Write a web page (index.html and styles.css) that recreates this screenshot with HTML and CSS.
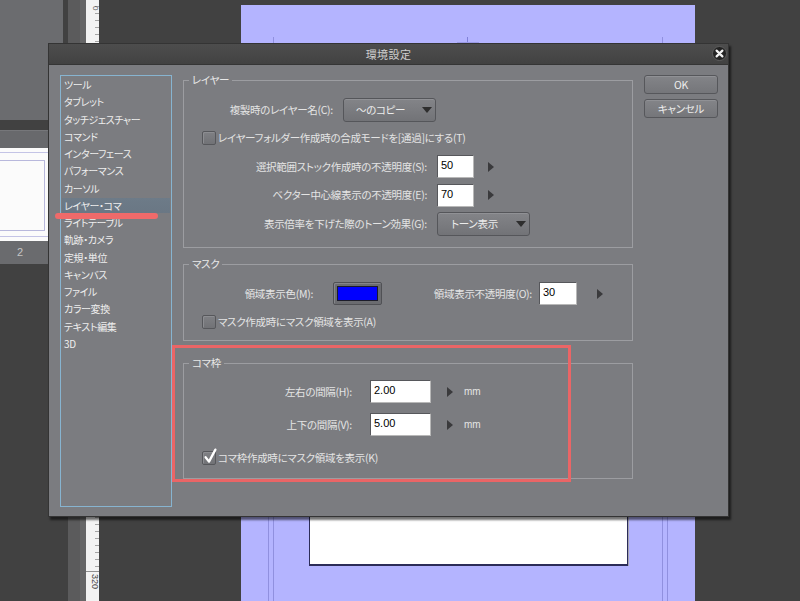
FILE: index.html
```html
<!DOCTYPE html>
<html lang="ja">
<head>
<meta charset="utf-8">
<title>環境設定</title>
<link rel="stylesheet" href="styles.css">
</head>
<body>
<div class="app">
  <div class="side">
    <div class="side-top"></div>
    <div class="side-gap"></div>
    <div class="side-head"></div>
    <div class="side-thumb"><div class="thumb-page"><div class="thumb-frame"></div></div></div>
    <div class="side-label">2</div>
  </div>
  <div class="strip"><div class="strip-a"></div><div class="strip-b"></div></div>
  <div class="ruler"><span class="r0">0</span><span class="r320">320</span></div>
  <div class="canvas">
    <div class="page">
      <div class="vline v1"></div>
      <div class="vline v2"></div>
      <div class="vline v3"></div>
      <div class="vline v4"></div>
      <div class="tick"></div>
      <div class="htick"></div>
      <div class="frame"></div>
    </div>
  </div>

  <div class="dialog">
    <div class="titlebar">
      <span class="title">環境設定</span>
      <span class="close"><svg width="15" height="15" viewBox="0 0 15 15"><circle cx="7.5" cy="7.5" r="7" fill="#232323" stroke="#5e5e5e" stroke-width="1"/><path d="M4.6 4.6 L10.4 10.4 M10.4 4.6 L4.6 10.4" stroke="#f2f2f2" stroke-width="2.2" stroke-linecap="round"/></svg></span>
    </div>
    <div class="body">
      <ul class="cats">
        <li>ツール</li>
        <li>タブレット</li>
        <li>タッチジェスチャー</li>
        <li>コマンド</li>
        <li>インターフェース</li>
        <li>パフォーマンス</li>
        <li>カーソル</li>
        <li class="sel">レイヤー・コマ</li>
        <li>ライトテーブル</li>
        <li>軌跡・カメラ</li>
        <li>定規・単位</li>
        <li>キャンバス</li>
        <li>ファイル</li>
        <li>カラー変換</li>
        <li>テキスト編集</li>
        <li>3D</li>
      </ul>

      <div class="panes">
        <section class="group g1">
          <span class="legend">レイヤー</span>
          <div class="row"><span class="lbl w149">複製時のレイヤー名(C):</span><span class="select">～のコピー<i class="caret"></i></span></div>
          <div class="row check-row"><span class="cb"></span><span class="cb-lbl">レイヤーフォルダー作成時の合成モードを[通過]にする(T)</span></div>
          <div class="row"><span class="lbl w243">選択範囲ストック作成時の不透明度(S):</span><span class="input w37">50</span><i class="spin sp14"></i></div>
          <div class="row"><span class="lbl w243">ベクター中心線表示の不透明度(E):</span><span class="input w37">70</span><i class="spin sp14"></i></div>
          <div class="row"><span class="lbl w243">表示倍率を下げた際のトーン効果(G):</span><span class="select">トーン表示<i class="caret"></i></span></div>
        </section>

        <section class="group g2">
          <span class="legend">マスク</span>
          <div class="row"><span class="lbl w129">領域表示色(M):</span><span class="swatch"><span class="swatch-color"></span></span><span class="lbl w150">領域表示不透明度(O):</span><span class="input w38">30</span><i class="spin sp20"></i></div>
          <div class="row check-row"><span class="cb"></span><span class="cb-lbl">マスク作成時にマスク領域を表示(A)</span></div>
        </section>

        <section class="group g3">
          <span class="legend">コマ枠</span>
          <div class="row"><span class="lbl w168">左右の間隔(H):</span><span class="input w61">2.00</span><i class="spin sp16"></i><span class="unit">mm</span></div>
          <div class="row"><span class="lbl w168">上下の間隔(V):</span><span class="input w61">5.00</span><i class="spin sp16"></i><span class="unit">mm</span></div>
          <div class="row check-row"><span class="cb checked"><svg width="14" height="17" viewBox="0 0 14 17"><path d="M2.6 9.2 L6 13.6 L12.4 1.6" fill="none" stroke="#ffffff" stroke-width="2.3" stroke-linecap="round" stroke-linejoin="round"/></svg></span><span class="cb-lbl">コマ枠作成時にマスク領域を表示(K)</span></div>
        </section>
      </div>

      <div class="buttons">
        <span class="btn">OK</span>
        <span class="btn">キャンセル</span>
      </div>
    </div>
    <div class="mark-box"></div>
    <div class="mark-line"></div>
  </div>
</div>
</body>
</html>
```

FILE: styles.css
```css
* { box-sizing: border-box; margin: 0; padding: 0; }
html, body { width: 800px; height: 601px; overflow: hidden; }
body {
  background: #414141;
  font-family: "Noto Sans CJK JP", sans-serif;
  font-size: 10.5px;
  letter-spacing: -0.3px;
  font-feature-settings: "palt";
  color: #e6e6e6;
}
.app { position: relative; display: flex; width: 800px; height: 601px; }

/* left side panel */
.side { width: 63px; margin-right: 5px; display: flex; flex-direction: column; }
.side-top { height: 120px; background: #6b6c6f; }
.side-gap { height: 10px; }
.side-head { height: 18px; background: #68696c; border-top: 1px solid #76777a; }
.side-thumb { height: 93px; background: #fbfbfb; padding-top: 4px; }
.thumb-page { height: 85px; border-top: 1px solid #c4c4e6; border-bottom: 1px solid #c4c4e6; padding-top: 7px; }
.thumb-frame { width: 45px; height: 71px; border: 1px solid #b8b8dc; border-left: none; }
.side-label { height: 23px; background: #6a6b6e; color: #c4c4c4; padding-left: 17px; line-height: 23px; font-family: "Liberation Sans", sans-serif; font-size: 11px; letter-spacing: 0; }

.strip { width: 18px; display: flex; }
.strip-a { width: 12px; background: #5b5b5c; }
.strip-b { width: 6px; background: #666667; }

.ruler {
  width: 13px;
  background-color: #f3f3f3;
  background-image: repeating-linear-gradient(to bottom, transparent 0 6px, #a4a4a4 6px 7px);
  background-size: 4px 100%;
  background-repeat: no-repeat;
  background-position: right top;
  display: flex;
  flex-direction: column;
  justify-content: space-between;
}
.r0 { writing-mode: vertical-rl; font-family: "Liberation Sans", sans-serif; font-size: 8px; line-height: 8px; letter-spacing: 0; color: #555; margin: 6px 0 0 1px; }
.r320 { height: 30px; border-top: 1px solid #909090; background: #f3f3f3; writing-mode: vertical-rl; font-family: "Liberation Sans", sans-serif; font-size: 9px; line-height: 9px; letter-spacing: 0; color: #444; padding: 2px 0 0 1px; }

.canvas { flex: 1; position: relative; overflow: hidden; }
.page { position: absolute; left: 142px; top: 5px; width: 454px; height: 620px; background: #b4b4ff; }
.vline { position: absolute; top: 32px; bottom: 0; width: 1px; background: #9090df; }
.v1 { left: 27px; top: 120px; }
.v2 { left: 32px; }
.v3 { left: 421px; }
.v4 { left: 426px; top: 120px; }
.tick { position: absolute; left: 226px; top: 32px; width: 1px; height: 6px; background: #8080d8; }
.htick { position: absolute; left: 216px; top: 37px; width: 22px; height: 1px; background: #9a9ae6; }
.frame { position: absolute; left: 68px; top: 440px; width: 319px; height: 121px; background: #fff; border: 1px solid #2c2c58; border-bottom-width: 2px; box-shadow: 1px 0 0 #a6a6b4; }

/* dialog */
.dialog {
  position: absolute; left: 48px; top: 43px; width: 681px; height: 474px;
  border: 1px solid #343434;
  background: #7b7c80;
  box-shadow: 2px 3px 2px rgba(0, 0, 0, 0.55);
  display: flex; flex-direction: column;
}
.titlebar {
  height: 21px; flex: none; position: relative;
  background: linear-gradient(#4d4d4d, #424242);
  border-bottom: 1px solid #353535;
  display: flex; align-items: center; justify-content: center;
}
.title { color: #cfcfcf; font-size: 11px; letter-spacing: 0.4px; line-height: 14px; }
.close { position: absolute; right: 1px; top: 2px; width: 15px; height: 15px; display: block; }
.close svg { display: block; }

.body { flex: 1; display: flex; gap: 11px; padding: 10px 10px 9px 11px; }

.cats { width: 112px; flex: none; border: 1px solid #87b4d0; list-style: none; padding: 0 1px; }
.cats li { height: 17.25px; line-height: 17.25px; padding-left: 2px; white-space: nowrap; color: #eeeeee; font-size: 10px; letter-spacing: -0.4px; }
.cats li.sel { background: linear-gradient(#6d7b88, #6a7784) no-repeat center / 100% 15px; }

.panes { width: 450px; flex: none; padding-top: 5px; display: flex; flex-direction: column; }
.group { position: relative; border: 1px solid #9c9da1; display: flex; flex-direction: column; }
.legend { position: absolute; left: 5px; top: -8px; padding: 0 3px; background: #7b7c80; line-height: 14px; color: #e8e8e8; }
.g1 { padding: 17px 0 11px; gap: 4.4px; }
.g2 { margin-top: 16.4px; padding: 17px 0 6px; gap: 4.4px; }
.g3 { margin-top: 21.6px; padding: 16px 0 8px; gap: 9px; }

.row { height: 24px; display: flex; align-items: center; }
.lbl { flex: none; text-align: right; white-space: nowrap; color: #e4e4e4; line-height: 14px; }
.w149 { width: 149px; margin-right: 10px; }
.w243 { width: 243px; margin-right: 10px; }
.w129 { width: 129px; margin-right: 20px; }
.w150 { width: 150px; margin-right: 7px; }
.w168 { width: 168px; margin-right: 18px; }

.check-row { padding-left: 18px; }
.cb {
  flex: none; width: 14px; height: 14px; position: relative;
  border: 1px solid #56575b; border-radius: 2px;
  background: linear-gradient(#7f8084, #717276);
  box-shadow: inset 1px 1px 0 #8c8d91;
}
.cb svg { position: absolute; left: 0; top: -4px; }
.cb-lbl { margin-left: 2px; white-space: nowrap; color: #e4e4e4; line-height: 14px; }

.select {
  flex: none; width: 93px; height: 24px; position: relative;
  border: 1px solid #55565a; border-radius: 3px;
  background: linear-gradient(#838488, #727377);
  box-shadow: inset 0 1px 0 #909195;
  padding-right: 18px;
  display: flex; align-items: center; justify-content: center;
  color: #ececec; line-height: 14px; white-space: nowrap;
}
.caret {
  position: absolute; right: 3px; top: 8px; width: 0; height: 0;
  border-top: 6px solid #2e2e2e; border-left: 5.5px solid transparent; border-right: 5.5px solid transparent;
}

.input {
  flex: none; height: 23px;
  background: #ffffff;
  border: 1px solid #56575b; border-right-color: #b8b8b8; border-bottom-color: #b8b8b8;
  color: #000;
  padding-left: 3px;
  font-family: "Liberation Sans", sans-serif; font-size: 11px; letter-spacing: 0; line-height: 19px;
}
.w37 { width: 37px; }
.w38 { width: 38px; }
.w61 { width: 61px; }

.spin { flex: none; width: 0; height: 0; border-left: 6px solid #3a3a3c; border-top: 5px solid transparent; border-bottom: 5px solid transparent; }
.sp14 { margin-left: 14px; }
.sp16 { margin-left: 16px; }
.sp20 { margin-left: 20px; }
.unit { margin-left: 11px; font-family: "Liberation Sans", sans-serif; font-size: 10px; letter-spacing: 0; color: #e4e4e4; }

.swatch { flex: none; width: 49px; height: 23px; padding: 3px 3px 3px 3px; border: 1px solid #505155; border-radius: 2px; background: #6b6c70; box-shadow: inset 1px 1px 0 #85868a; }
.swatch-color { display: block; height: 100%; background: #0000ff; border: 1px solid #1c1c2a; }

.buttons { width: 74px; flex: none; display: flex; flex-direction: column; gap: 5px; }
.btn {
  height: 19px; display: flex; align-items: center; justify-content: center;
  border: 1px solid #56575b; border-radius: 3px;
  background: linear-gradient(#838488, #75767a);
  box-shadow: inset 0 1px 0 #909195;
  color: #ededed; line-height: 14px;
}

/* annotation marks */
.mark-box { position: absolute; left: 123px; top: 301px; width: 399px; height: 137px; border: 3px solid #ea6566; }
.mark-line { position: absolute; left: 6px; top: 169px; width: 103px; height: 6px; border-radius: 3px; background: #ef6a6a; }
```
